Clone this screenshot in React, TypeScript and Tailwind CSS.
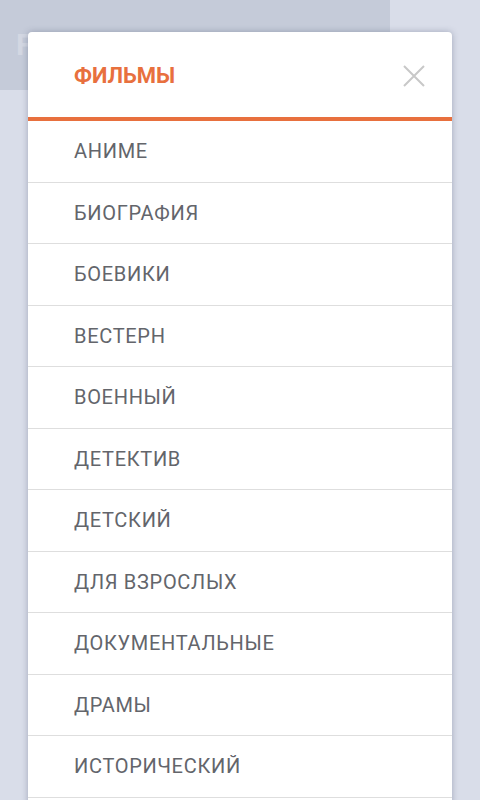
const genres = [
  "АНИМЕ",
  "БИОГРАФИЯ",
  "БОЕВИКИ",
  "ВЕСТЕРН",
  "ВОЕННЫЙ",
  "ДЕТЕКТИВ",
  "ДЕТСКИЙ",
  "ДЛЯ ВЗРОСЛЫХ",
  "ДОКУМЕНТАЛЬНЫЕ",
  "ДРАМЫ",
  "ИСТОРИЧЕСКИЙ",
];

export default function App() {
  return (
    <div className="relative h-[800px] w-[480px] overflow-hidden bg-[#d9dde9] font-['Roboto',sans-serif]">
      {/* dimmed page behind the menu */}
      <div className="h-[90px] w-[390px] bg-[#c5cbd9] pl-[16px] pt-[22px]">
        <span className="text-[30px] font-bold text-[#d3d7e2]">Filmix</span>
      </div>

      <div className="absolute left-[28px] top-[32px] w-[424px] overflow-hidden rounded-[4px] bg-white shadow-[0_0_6px_rgba(60,70,100,0.35)]">
        <div className="flex h-[85px] items-center justify-between pl-[46px] pr-[27px]">
          <span className="pt-[2px] text-[22px] font-bold text-[#e8703e]">
            ФИЛЬМЫ
          </span>
          <svg width="22" height="22" viewBox="0 0 22 22" className="mt-[3px]">
            <path
              d="M1 1L21 21M21 1L1 21"
              stroke="#c8c8c8"
              strokeWidth="2"
              fill="none"
            />
          </svg>
        </div>
        <div className="h-[4px] bg-[#e8703e]" />
        <ul className="pb-[40px]">
          {genres.map((g) => (
            <li
              key={g}
              className="flex h-[61.5px] items-center border-b border-[#dedede] pl-[46px] text-[20px] tracking-[0.7px] text-[#63656b]"
            >
              {g}
            </li>
          ))}
        </ul>
      </div>
    </div>
  );
}
